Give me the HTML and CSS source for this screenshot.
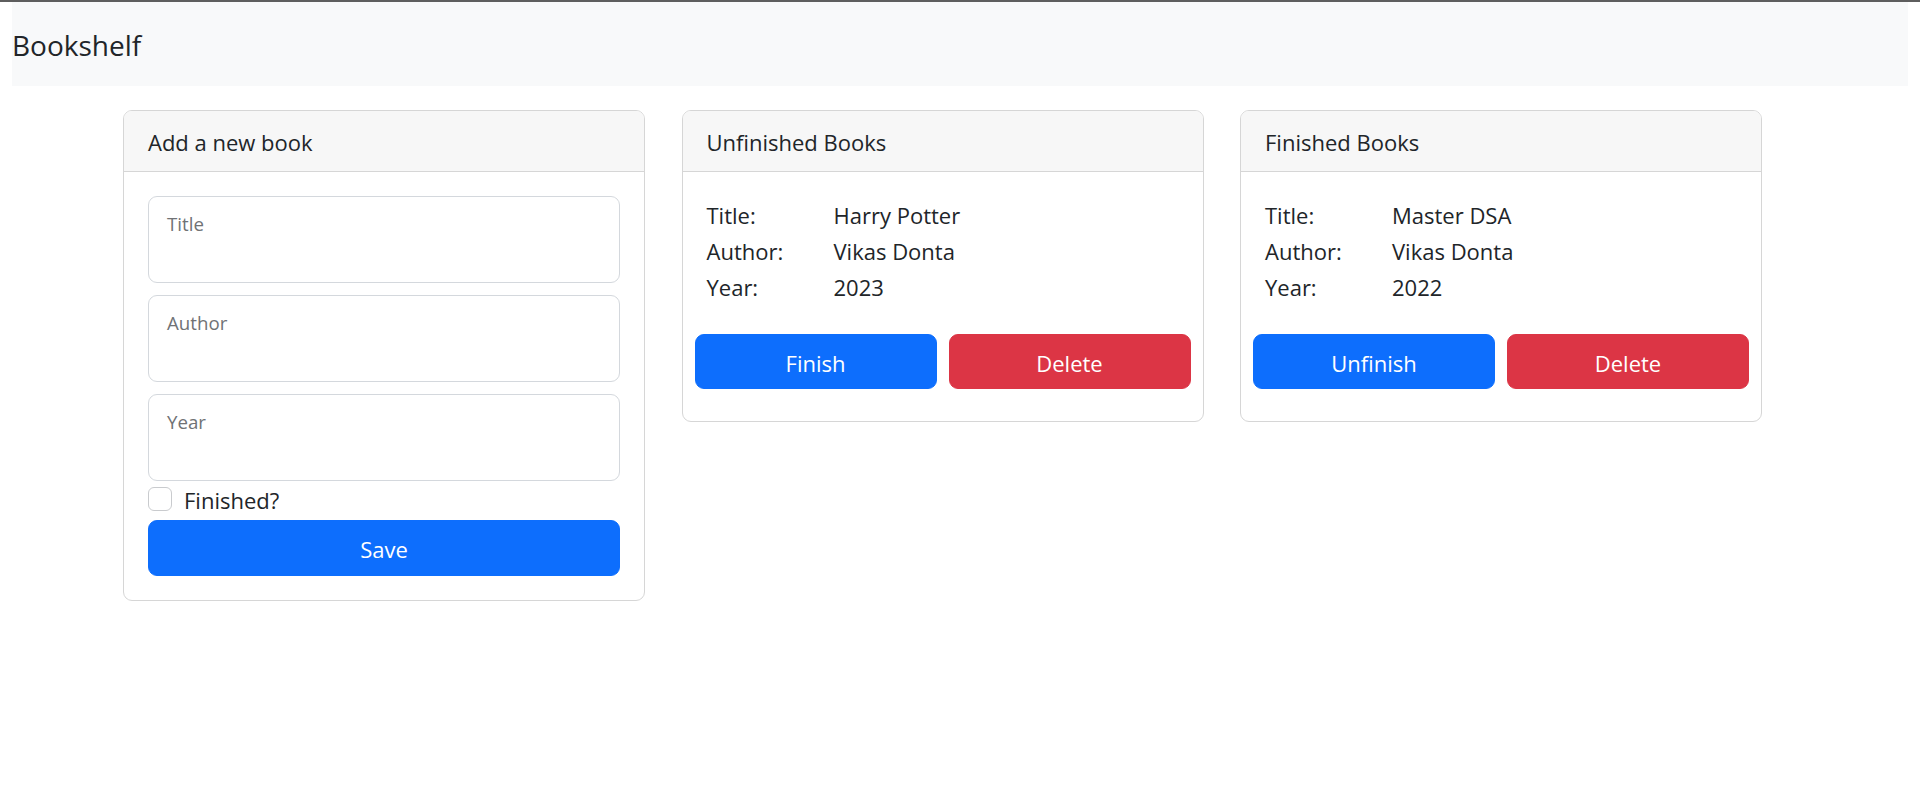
FILE: index.html
```html
<!DOCTYPE html>
<html lang="en">
<head>
<meta charset="utf-8">
<title>Bookshelf</title>
<link rel="stylesheet" href="styles.css">
</head>
<body>
<div class="shell">
  <nav class="navbar"><span class="brand">Bookshelf</span></nav>
  <main class="board">
    <section class="card">
      <header class="card-header">Add a new book</header>
      <form class="form-body">
        <div class="field">
          <input id="title" class="field-input" type="text">
          <label class="field-label" for="title">Title</label>
        </div>
        <div class="field">
          <input id="author" class="field-input" type="text">
          <label class="field-label" for="author">Author</label>
        </div>
        <div class="field field-last">
          <input id="year" class="field-input" type="number">
          <label class="field-label" for="year">Year</label>
        </div>
        <label class="check">
          <input class="check-box" type="checkbox">
          <span class="check-text">Finished?</span>
        </label>
        <button type="button" class="btn btn-primary btn-save">Save</button>
      </form>
    </section>

    <section class="card">
      <header class="card-header">Unfinished Books</header>
      <div class="book-body">
        <dl class="book-info">
          <dt>Title:</dt><dd>Harry Potter</dd>
          <dt>Author:</dt><dd>Vikas Donta</dd>
          <dt>Year:</dt><dd>2023</dd>
        </dl>
        <div class="book-actions">
          <button type="button" class="btn btn-primary btn-action">Finish</button>
          <button type="button" class="btn btn-danger btn-action">Delete</button>
        </div>
      </div>
    </section>

    <section class="card">
      <header class="card-header">Finished Books</header>
      <div class="book-body">
        <dl class="book-info">
          <dt>Title:</dt><dd>Master DSA</dd>
          <dt>Author:</dt><dd>Vikas Donta</dd>
          <dt>Year:</dt><dd>2022</dd>
        </dl>
        <div class="book-actions">
          <button type="button" class="btn btn-primary btn-action">Unfinish</button>
          <button type="button" class="btn btn-danger btn-action">Delete</button>
        </div>
      </div>
    </section>
  </main>
</div>
</body>
</html>
```

FILE: styles.css
```css
* { box-sizing: border-box; }

html, body {
  margin: 0;
  padding: 0;
  background: #ffffff;
}

body {
  border-top: 2px solid #5e5e5e;
  font-family: "Open Sans", "Noto Sans", sans-serif;
  font-size: 22px;
  line-height: 36px;
  color: #212529;
}

.shell {
  padding: 0 12px;
}

.navbar {
  height: 84px;
  background: #f8f9fa;
  padding: 22px 0 20px;
}

.brand {
  display: block;
  font-size: 28px;
  line-height: 42px;
  color: #212529;
}

.board {
  display: flex;
  align-items: flex-start;
  gap: 36.5px;
  margin-top: 24px;
  padding-left: 111px;
}

.card {
  width: 522px;
  border: 1px solid #d6d6d6;
  border-radius: 9px;
  overflow: hidden;
  background: #fff;
}

.card-header {
  height: 61px;
  padding: 13px 24px 11px;
  background: #f7f7f7;
  border-bottom: 1px solid #d6d6d6;
  line-height: 36px;
}

/* form card */
.form-body {
  display: flex;
  flex-direction: column;
  padding: 24px;
  margin: 0;
}

.field {
  position: relative;
  margin-bottom: 12px;
}

.field-last {
  margin-bottom: 0;
}

.field-input {
  display: block;
  width: 100%;
  height: 87px;
  border: 1px solid #d4d8dd;
  border-radius: 9px;
  background: #fff;
  font: inherit;
  padding: 0 18px;
  outline: none;
  -moz-appearance: textfield;
}

.field-input::-webkit-outer-spin-button,
.field-input::-webkit-inner-spin-button {
  -webkit-appearance: none;
  margin: 0;
}

.field-label {
  position: absolute;
  left: 19px;
  top: 15px;
  font-size: 18.7px;
  line-height: 26px;
  color: #707275;
  pointer-events: none;
}

.check {
  display: flex;
  align-items: flex-start;
  height: 36px;
  margin: 1px 0 2px;
  cursor: pointer;
}

.check-box {
  -webkit-appearance: none;
  appearance: none;
  width: 24px;
  height: 24px;
  margin: 5px 12px 0 0;
  border: 1px solid #c9cbce;
  border-radius: 6px;
  background: #fff;
  flex: none;
}

.check-text {
  line-height: 36px;
}

/* buttons */
.btn {
  display: block;
  width: 100%;
  border: 1px solid transparent;
  border-radius: 9px;
  font: inherit;
  line-height: 36px;
  color: #fff;
  text-align: center;
  padding: 10px 0 8px;
  cursor: pointer;
}

.btn-primary {
  background: #0d6efd;
  border-color: #0d6efd;
}

.btn-danger {
  background: #dc3545;
  border-color: #dc3545;
}

.btn-action {
  padding: 10px 0 7px;
}

/* book cards */
.book-body {
  padding: 24.5px 12px 32px;
}

.book-info {
  display: grid;
  grid-template-columns: 127px 1fr;
  margin: 0 0 29.5px;
  padding: 0 12px;
}

.book-info dt,
.book-info dd {
  margin: 0;
  line-height: 36px;
  font-weight: 400;
}

.book-actions {
  display: grid;
  grid-template-columns: 1fr 1fr;
  gap: 12px;
}
```
